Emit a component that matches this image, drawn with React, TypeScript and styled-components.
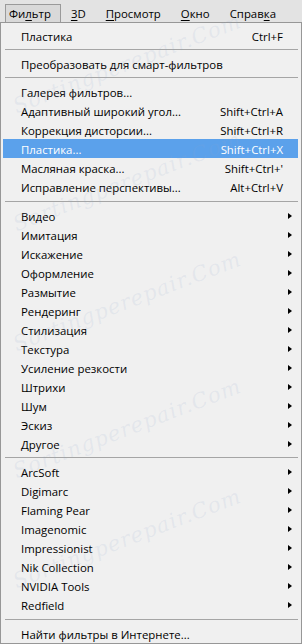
import React from "react";
import styled, { createGlobalStyle } from "styled-components";

type Entry =
  | { kind: "item"; label: string; shortcut?: string; sub?: boolean; active?: boolean }
  | { kind: "sep"; size?: number };

const entries: Entry[] = [
  { kind: "item", label: "Пластика", shortcut: "Ctrl+F" },
  { kind: "sep" },
  { kind: "item", label: "Преобразовать для смарт-фильтров" },
  { kind: "sep" },
  { kind: "item", label: "Галерея фильтров..." },
  { kind: "item", label: "Адаптивный широкий угол...", shortcut: "Shift+Ctrl+A" },
  { kind: "item", label: "Коррекция дисторсии...", shortcut: "Shift+Ctrl+R" },
  { kind: "item", label: "Пластика...", shortcut: "Shift+Ctrl+X", active: true },
  { kind: "item", label: "Масляная краска...", shortcut: "Shift+Ctrl+'" },
  { kind: "item", label: "Исправление перспективы...", shortcut: "Alt+Ctrl+V" },
  { kind: "sep", size: 10 },
  ...[
    "Видео",
    "Имитация",
    "Искажение",
    "Оформление",
    "Размытие",
    "Рендеринг",
    "Стилизация",
    "Текстура",
    "Усиление резкости",
    "Штрихи",
    "Шум",
    "Эскиз",
    "Другое",
  ].map((label): Entry => ({ kind: "item", label, sub: true })),
  { kind: "sep" },
  ...[
    "ArcSoft",
    "Digimarc",
    "Flaming Pear",
    "Imagenomic",
    "Impressionist",
    "Nik Collection",
    "NVIDIA Tools",
    "Redfield",
  ].map((label): Entry => ({ kind: "item", label, sub: true })),
  { kind: "sep", size: 10 },
  { kind: "item", label: "Найти фильтры в Интернете..." },
];

const GlobalStyle = createGlobalStyle`
  html, body {
    margin: 0;
    padding: 0;
    background: #f0f0f0;
  }
  body {
    font-family: "Open Sans", "Noto Sans", sans-serif;
    font-size: 11.4px;
    color: #000;
  }
`;

const Window = styled.div`
  position: relative;
  width: 302px;
  height: 644px;
  overflow: hidden;
  background: #f0f0f0;
`;

const MenuBar = styled.div`
  display: flex;
  align-items: flex-end;
  gap: 6px;
  height: 22px;
  padding-left: 5px;
  background: #e3e3e3;
  box-sizing: border-box;
`;

const BarItem = styled.div<{ $open?: boolean }>`
  height: 18px;
  line-height: 17px;
  padding: 0 9px 0 3px;
  box-sizing: border-box;
  border: 1px solid ${({ $open }) => ($open ? "#9a9a9a" : "transparent")};
  border-bottom: none;
  background: ${({ $open }) => ($open ? "#d9d9d9" : "transparent")};
  white-space: nowrap;

  u {
    text-decoration: underline;
    text-underline-offset: 2px;
  }
`;

const Menu = styled.div`
  display: flex;
  flex-direction: column;
  height: 622px;
  box-sizing: border-box;
  border: 1px solid #979797;
  padding: 3px 3px 0 2px;
  background: #f0f0f0;
`;

const Row = styled.div<{ $active?: boolean }>`
  display: grid;
  grid-template-columns: 1fr auto 15px;
  align-items: center;
  height: 19px;
  box-sizing: border-box;
  padding: 2px 0 0 18px;
  flex-shrink: 0;
  background: ${({ $active }) => ($active ? "#5ba1eb" : "transparent")};
  color: ${({ $active }) => ($active ? "#fff" : "#000")};
  white-space: nowrap;
`;

const Label = styled.span`
  line-height: 17px;
`;

const Shortcut = styled.span`
  line-height: 17px;
  text-align: right;
`;

const ArrowCell = styled.span`
  display: flex;
  align-items: center;
  padding-left: 5px;
  margin-top: -2px;
`;

const Arrow = styled.span`
  width: 0;
  height: 0;
  border-top: 3.5px solid transparent;
  border-bottom: 3.5px solid transparent;
  border-left: 4px solid #000;
`;

const Separator = styled.div<{ $size: number }>`
  flex-shrink: 0;
  height: ${({ $size }) => $size}px;
  display: flex;
  align-items: center;
  padding-left: 2px;

  &::after {
    content: "";
    flex: 1;
    height: 1px;
    background: #a5a5a5;
  }
`;

const Watermark = styled.div`
  position: absolute;
  left: 14px;
  width: 220px;
  transform: rotate(-21deg);
  transform-origin: left center;
  font-family: "DejaVu Serif", serif;
  font-style: italic;
  font-size: 21px;
  letter-spacing: 1px;
  color: rgba(140, 165, 205, 0.13);
  pointer-events: none;
  white-space: nowrap;
`;

export default function App() {
  return (
    <Window>
      <GlobalStyle />
      <MenuBar>
        <BarItem $open>
          Фи<u>л</u>ьтр
        </BarItem>
        <BarItem>
          <u>3</u>D
        </BarItem>
        <BarItem>
          <u>П</u>росмотр
        </BarItem>
        <BarItem>
          <u>О</u>кно
        </BarItem>
        <BarItem>
          Справ<u>к</u>а
        </BarItem>
      </MenuBar>
      <Menu>
        {entries.map((e, i) =>
          e.kind === "sep" ? (
            <Separator key={i} $size={e.size ?? 9} />
          ) : (
            <Row key={i} $active={e.active}>
              <Label>{e.label}</Label>
              <Shortcut>{e.shortcut ?? ""}</Shortcut>
              <ArrowCell>{e.sub && <Arrow />}</ArrowCell>
            </Row>
          )
        )}
      </Menu>
      {[95, 213, 333, 460, 570].map((top) => (
        <Watermark key={top} style={{ top }}>
          Sortingperepair.Com
        </Watermark>
      ))}
    </Window>
  );
}
